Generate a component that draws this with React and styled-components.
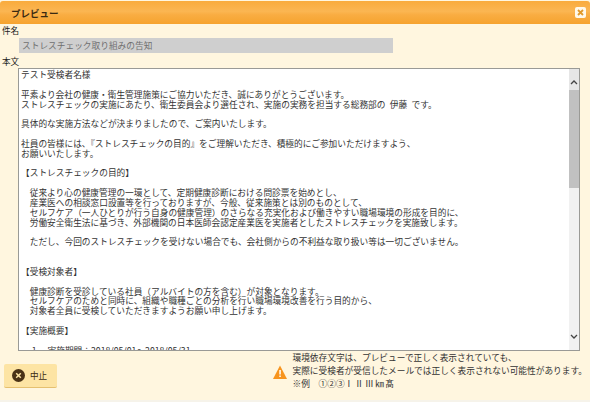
import React from "react";
import styled, { createGlobalStyle } from "styled-components";

const GlobalStyle = createGlobalStyle`
  html, body {
    margin: 0;
    padding: 0;
    background: #f6f3ea;
  }
  body {
    font-family: "Noto Sans CJK JP", "Liberation Sans", sans-serif;
    color: #333;
  }
`;

const Dialog = styled.div`
  width: 590px;
  height: 400px;
  display: flex;
  flex-direction: column;
  background: #fff6df;
  overflow: hidden;
`;

const TitleBar = styled.header`
  height: 23px;
  margin-top: 1px;
  flex: none;
  display: flex;
  align-items: center;
  justify-content: space-between;
  padding: 0 4px 0 11px;
  background: linear-gradient(#f9ab3c 0%, #fbb652 45%, #f9ad42 60%, #f6a32f 100%);
  border-radius: 3px 3px 0 0;
`;

const Title = styled.h1`
  margin: 0;
  font-size: 9.5px;
  font-weight: 700;
  color: #3a2a12;
`;

const CloseButton = styled.button`
  width: 11px;
  height: 11px;
  padding: 0;
  border: 0;
  border-radius: 2px;
  background: #fff9ea;
  display: flex;
  align-items: center;
  justify-content: center;
`;

const Content = styled.div`
  flex: 1;
  display: flex;
  flex-direction: column;
  min-height: 0;
`;

const FieldLabel = styled.label`
  display: block;
  font-size: 8.6px;
  line-height: 12px;
  padding-left: 2px;
  color: #222;
  margin-top: ${(p) => p.$top}px;
`;

const SubjectInput = styled.div`
  width: 374px;
  height: 15px;
  margin: 2px 0 0 19px;
  padding-left: 3px;
  box-sizing: border-box;
  background: #cfcfcf;
  color: #6f6f6f;
  font-size: 8.7px;
  line-height: 15px;
`;

const BodyBox = styled.div`
  width: 562px;
  height: 284px;
  margin: 1px 0 0 18px;
  box-sizing: border-box;
  border: 1px solid #9a9a96;
  background: #fff;
  display: flex;
  overflow: hidden;
`;

const BodyText = styled.pre`
  flex: 1;
  margin: 0;
  padding: 1px 0 0 2px;
  font-family: inherit;
  font-size: 8.7px;
  line-height: 9.85px;
  color: #333;
  overflow: hidden;
  white-space: pre;
`;

const ScrollBar = styled.div`
  width: 10px;
  flex: none;
  display: flex;
  flex-direction: column;
  background: #f1f1f1;
`;

const ScrollArrow = styled.div`
  height: 21px;
  flex: none;
  display: flex;
  justify-content: center;
  box-sizing: border-box;
  align-items: ${(p) => (p.$up ? "flex-end" : "flex-start")};
  padding: 5px 0;
  background: ${(p) => (p.$up ? "#e6e6e6" : "transparent")};
`;

const ScrollTrack = styled.div`
  flex: 1;
`;

const ScrollThumb = styled.div`
  height: 98px;
  background: #c1c1c1;
`;

const Footer = styled.footer`
  flex: 1;
  display: flex;
  align-items: center;
  justify-content: space-between;
  padding: 0 3px 0 4px;
`;

const CancelButton = styled.button`
  width: 53px;
  height: 24px;
  padding: 0 0 0 8px;
  border: 0;
  border-bottom: 1px solid #e5c070;
  border-radius: 2px;
  background: #fde4a4;
  display: flex;
  align-items: center;
  gap: 5px;
  font-family: inherit;
  font-size: 8.6px;
  color: #3a2a12;
`;

const Notice = styled.div`
  display: flex;
  align-items: flex-start;
  gap: 5px;
  padding-bottom: 10px;
`;

const WarningIcon = styled.svg`
  margin-top: 14px;
  flex: none;
`;

const NoticeText = styled.p`
  margin: 0;
  font-size: 8.7px;
  line-height: 13px;
  color: #333;
  white-space: pre;
`;

const DependentChars = styled.span`
  letter-spacing: 1.5px;
`;

const bodyLines = `テスト受検者名様

平素より会社の健康・衛生管理施策にご協力いただき、誠にありがとうございます。
ストレスチェックの実施にあたり、衛生委員会より選任され、実施の実務を担当する総務部の\u2002伊藤\u2002です。

具体的な実施方法などが決まりましたので、ご案内いたします。

社員の皆様には、『ストレスチェックの目的』をご理解いただき、積極的にご参加いただけますよう、
お願いいたします。

【ストレスチェックの目的】

　従来より心の健康管理の一環として、定期健康診断における問診票を始めとし、
　産業医への相談窓口設置等を行っておりますが、今般、従来施策とは別のものとして、
　セルフケア（一人ひとりが行う自身の健康管理）のさらなる充実化および働きやすい職場環境の形成を目的に、
　労働安全衛生法に基づき、外部機関の日本医師会認定産業医を実施者としたストレスチェックを実施致します。

　ただし、今回のストレスチェックを受けない場合でも、会社側からの不利益な取り扱い等は一切ございません。


【受検対象者】

　健康診断を受診している社員（アルバイトの方を含む）が対象となります。
　セルフケアのためと同時に、組織や職種ごとの分析を行い職場環境改善を行う目的から、
　対象者全員に受検していただきますようお願い申し上げます。

【実施概要】

　 1.　実施期間：2018/05/01～2018/05/31`;

function App() {
  return (
    <>
      <GlobalStyle />
      <Dialog>
        <TitleBar>
          <Title>プレビュー</Title>
          <CloseButton aria-label="閉じる">
            <svg width="7" height="7" viewBox="0 0 7 7">
              <path d="M1 1l5 5M6 1l-5 5" stroke="#e09a2c" strokeWidth="1.8" />
            </svg>
          </CloseButton>
        </TitleBar>
        <Content>
          <FieldLabel $top={0}>件名</FieldLabel>
          <SubjectInput>ストレスチェック取り組みの告知</SubjectInput>
          <FieldLabel $top={2}>本文</FieldLabel>
          <BodyBox>
            <BodyText>{bodyLines}</BodyText>
            <ScrollBar>
              <ScrollArrow $up>
                <svg width="8" height="6" viewBox="0 0 8 6">
                  <path d="M1 5l3-3 3 3" fill="none" stroke="#444" strokeWidth="1.3" />
                </svg>
              </ScrollArrow>
              <ScrollThumb />
              <ScrollTrack />
              <ScrollArrow>
                <svg width="8" height="6" viewBox="0 0 8 6">
                  <path d="M1 1l3 3 3-3" fill="none" stroke="#444" strokeWidth="1.3" />
                </svg>
              </ScrollArrow>
            </ScrollBar>
          </BodyBox>
          <Footer>
            <CancelButton>
              <svg width="13" height="13" viewBox="0 0 13 13">
                <circle cx="6.5" cy="6.5" r="6.5" fill="#4a3216" />
                <path d="M4.2 4.2l4.6 4.6M8.8 4.2l-4.6 4.6" stroke="#fde4a4" strokeWidth="1.5" />
              </svg>
              中止
            </CancelButton>
            <Notice>
              <WarningIcon width="14" height="14" viewBox="0 0 14 14">
                <path d="M7 0.5L14 14H0z" fill="#f7941d" />
                <rect x="6.3" y="5" width="1.5" height="4.5" fill="#fff" />
                <rect x="6.3" y="10.5" width="1.5" height="1.5" fill="#fff" />
              </WarningIcon>
              <NoticeText>
                {"環境依存文字は、プレビューで正しく表示されていても、\n実際に受検者が受信したメールでは正しく表示されない可能性があります。\n※例　①②③"}
                <DependentChars>ⅠⅡⅢ㎞</DependentChars>髙
              </NoticeText>
            </Notice>
          </Footer>
        </Content>
      </Dialog>
    </>
  );
}

export default App;
